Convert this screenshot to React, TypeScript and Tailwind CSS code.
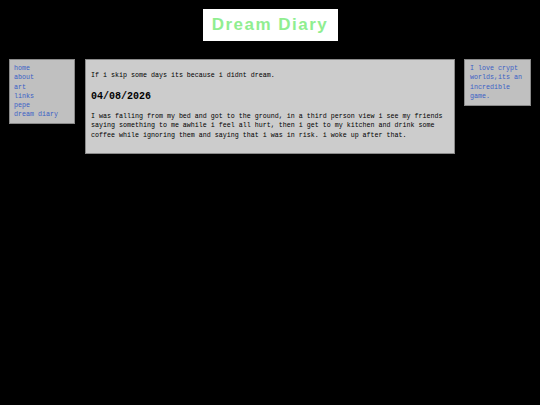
export default function App() {
  const links = ["home", "about", "art", "links", "pepe", "dream diary"];

  return (
    <div className="min-h-screen w-full bg-black pt-[9px] font-['Liberation_Mono',monospace]">
      {/* Title */}
      <div className="flex justify-center">
        <h1 className="flex h-[32px] w-[135px] items-center justify-center bg-white font-['Liberation_Sans',Arial,sans-serif] text-[17px] font-bold tracking-[1.5px] text-[#90ee90]">
          Dream Diary
        </h1>
      </div>

      {/* Columns */}
      <div className="mt-[18px] flex items-start px-[9px]">
        {/* Nav */}
        <nav className="w-[66px] shrink-0 border border-[#8a8a8a] bg-[#c0c0c0] px-[4px] pt-[4px] pb-[3px] text-[6.67px] leading-[9.3px]">
          <ul>
            {links.map((l) => (
              <li key={l}>
                <a href="#" className="text-[#3b5fc6]">
                  {l}
                </a>
              </li>
            ))}
          </ul>
        </nav>

        {/* Main */}
        <main className="ml-[10px] w-[370px] shrink-0 border border-[#8a8a8a] bg-[#cccccc] px-[5px] pt-[11px] pb-[13px] text-[6.67px] leading-[9.5px] text-black">
          <p>If i skip some days its because i didnt dream.</p>
          <h2 className="mt-[10px] text-[10px] font-bold leading-[12px]">04/08/2026</h2>
          <p className="mt-[9px]">
            I was falling from my bed and got to the ground, in a third person view i see my friends
            saying something to me awhile i feel all hurt, then i get to my kitchen and drink some
            coffee while ignoring them and saying that i was in risk. i woke up after that.
          </p>
        </main>

        {/* Side note */}
        <aside className="ml-[9px] w-[67px] shrink-0 border border-[#8a8a8a] bg-[#c0c0c0] px-[5px] pt-[4px] pb-[3px] text-[6.67px] leading-[9.4px] text-[#3b5fc6]">
          I love crypt worlds,its an incredible game.
        </aside>
      </div>
    </div>
  );
}
